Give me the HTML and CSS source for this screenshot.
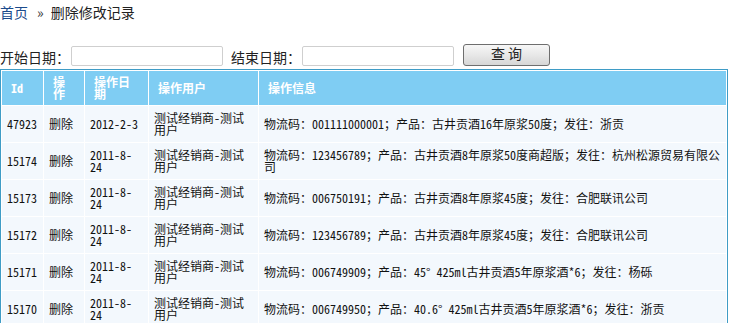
FILE: index.html
```html
<!DOCTYPE html>
<html lang="zh-CN">
<head>
  <meta charset="utf-8">
  <title>删除修改记录</title>
  <link rel="stylesheet" href="styles.css">
</head>
<body>
  <!-- 面包屑 -->
  <div class="crumb">
    <a href="#" class="crumb-home">首页</a><span class="crumb-sep">»</span><span class="crumb-cur">删除修改记录</span>
  </div>

  <!-- 查询条件 -->
  <form class="search" onsubmit="return false;">
    <label class="search-label">开始日期：</label>
    <input type="text" class="search-input">
    <label class="search-label search-label-end">结束日期：</label>
    <input type="text" class="search-input">
    <button type="submit" class="search-btn">查 询</button>
  </form>

  <!-- 记录列表 -->
  <table class="list">
    <thead>
      <tr>
        <th class="col-id">Id</th>
        <th class="col-op">操作</th>
        <th class="col-date">操作日期</th>
        <th class="col-user">操作用户</th>
        <th>操作信息</th>
      </tr>
    </thead>
    <tbody>
      <tr>
        <td>47923</td>
        <td>删除</td>
        <td>2012-2-3</td>
        <td>测试经销商-测试用户</td>
        <td>物流码：001111000001；产品：古井贡酒16年原浆50度；发往：浙贡</td>
      </tr>
      <tr>
        <td>15174</td>
        <td>删除</td>
        <td>2011-8-24</td>
        <td>测试经销商-测试用户</td>
        <td>物流码：123456789；产品：古井贡酒8年原浆50度商超版；发往：杭州松源贸易有限公司</td>
      </tr>
      <tr>
        <td>15173</td>
        <td>删除</td>
        <td>2011-8-24</td>
        <td>测试经销商-测试用户</td>
        <td>物流码：006750191；产品：古井贡酒8年原浆45度；发往：合肥联讯公司</td>
      </tr>
      <tr>
        <td>15172</td>
        <td>删除</td>
        <td>2011-8-24</td>
        <td>测试经销商-测试用户</td>
        <td>物流码：123456789；产品：古井贡酒8年原浆45度；发往：合肥联讯公司</td>
      </tr>
      <tr>
        <td>15171</td>
        <td>删除</td>
        <td>2011-8-24</td>
        <td>测试经销商-测试用户</td>
        <td>物流码：006749909；产品：45° 425ml古井贡酒5年原浆酒*6；发往：杨砾</td>
      </tr>
      <tr>
        <td>15170</td>
        <td>删除</td>
        <td>2011-8-24</td>
        <td>测试经销商-测试用户</td>
        <td>物流码：006749950；产品：40.6° 425ml古井贡酒5年原浆酒*6；发往：浙贡</td>
      </tr>
    </tbody>
  </table>
</body>
</html>
```

FILE: styles.css
```css
/* 공통 초기화 */
* {
  margin: 0; padding: 0; box-sizing: border-box;
}
body {
  background-color: #fff;
  color: #222;
  font-family: "Noto Sans CJK SC", sans-serif;
  font-size: 14px;
}

/* 面包屑 */
.crumb {
  height: 24px;
  padding-top: 2px;
  line-height: 20px;
}
.crumb-home {
  color: #1b4b8c;
  text-decoration: none;
}
.crumb-sep {
  margin: 0 7px 0 9px;
  color: #333;
}

/* 查询条件 */
.search {
  display: flex;
  align-items: flex-end;
  height: 22px;
  margin-top: 20px;
}
.search-label {
  line-height: 17px;
  white-space: nowrap;
}
.search-label-end {
  margin-left: 8px;
}
.search-input {
  width: 152px; height: 20px;
  margin-left: 1px;
  border: 1px solid #cfcfcf;
  border-radius: 2px;
  background: #fff;
  font: inherit;
}
.search-btn {
  width: 87px; height: 22px;
  margin-left: 9px;
  padding-bottom: 4px;
  border: 1px solid #6e6e6e;
  border-radius: 3px;
  background: linear-gradient(#f7f7f7, #e6e6e6 55%, #d6d6d6);
  color: #222;
  font: inherit;
  line-height: 14px;
  cursor: pointer;
}

/* 记录列表 */
.list {
  width: 728px;
  margin-top: 3px;
  table-layout: fixed;
  border-collapse: separate;
  border-spacing: 1px;
  border: 1px solid #3f9cc6;
  background: #fff;
  font-size: 12px;
  font-feature-settings: "hwid";
}
.list th {
  height: 34px;
  padding: 0 8px 0 9px;
  background: #7fcdf3;
  color: #fff;
  font-weight: bold;
  line-height: 12px;
  text-align: left;
  vertical-align: middle;
}
.list td {
  height: 36px;
  padding: 0 5px;
  background: #f3f8fd;
  color: #111;
  line-height: 12px;
  vertical-align: middle;
}
.col-id { width: 41px; }
.col-op { width: 40px; }
.col-date { width: 63px; }
.col-user { width: 109px; }
```
